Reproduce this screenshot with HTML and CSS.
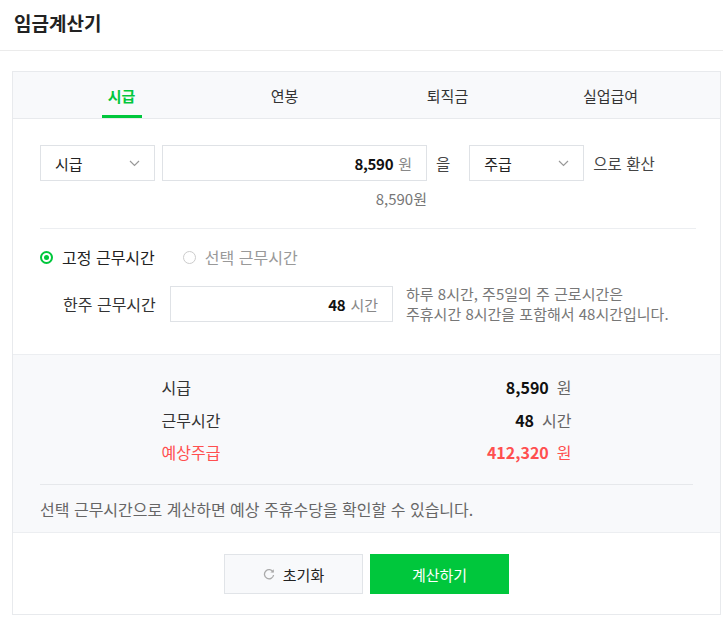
FILE: index.html
```html
<!DOCTYPE html>
<html lang="ko">
<head>
<meta charset="utf-8">
<link rel="stylesheet" href="styles.css">
</head>
<body>
<header class="top">
  <h1 class="title">임금계산기</h1>
</header>
<div class="card">
  <nav class="tabs">
    <div class="tab active"><span>시급</span></div>
    <div class="tab"><span>연봉</span></div>
    <div class="tab"><span>퇴직금</span></div>
    <div class="tab"><span>실업급여</span></div>
  </nav>
  <section class="form">
    <div class="row-convert">
      <div class="select s1"><span>시급</span><svg class="chev" width="11" height="7" viewBox="0 0 11 7"><path d="M1 1l4.5 4.5L10 1" fill="none" stroke="#999" stroke-width="1.2"/></svg></div>
      <div class="input wide"><b>8,590</b><span class="unit">원</span></div>
      <span class="word">을</span>
      <div class="select s2"><span>주급</span><svg class="chev" width="11" height="7" viewBox="0 0 11 7"><path d="M1 1l4.5 4.5L10 1" fill="none" stroke="#999" stroke-width="1.2"/></svg></div>
      <span class="word w2">으로 환산</span>
    </div>
    <div class="sub">8,590원</div>
    <hr class="divider">
    <div class="radios">
      <label class="radio on"><span class="dot"></span>고정 근무시간</label>
      <label class="radio off"><span class="dot"></span>선택 근무시간</label>
    </div>
    <div class="row-hours">
      <span class="hlabel">한주 근무시간</span>
      <div class="input hours"><b>48</b><span class="unit">시간</span></div>
      <p class="help">하루 8시간, 주5일의 주 근로시간은<br>주휴시간 8시간을 포함해서 48시간입니다.</p>
    </div>
  </section>
  <section class="result">
    <div class="rows">
      <div class="rrow"><span>시급</span><span class="val"><b>8,590</b><i>원</i></span></div>
      <div class="rrow"><span>근무시간</span><span class="val"><b>48</b><i>시간</i></span></div>
      <div class="rrow red"><span>예상주급</span><span class="val"><b>412,320</b><i>원</i></span></div>
    </div>
    <hr class="divider2">
    <p class="note">선택 근무시간으로 계산하면 예상 주휴수당을 확인할 수 있습니다.</p>
  </section>
  <div class="actions">
    <button class="btn reset"><svg width="12" height="12" viewBox="0 0 12 12"><path d="M10.2 4.2A4.6 4.6 0 1 0 10.6 7" fill="none" stroke="#aaa" stroke-width="1.3"/><path d="M10.8 1.2v3.4H7.4z" fill="#aaa"/></svg>초기화</button>
    <button class="btn go">계산하기</button>
  </div>
</div>
</body>
</html>
```
FILE: styles.css
```css
* { box-sizing: border-box; }
body {
  margin: 0;
  font-family: "Noto Sans CJK KR", "Noto Sans", sans-serif;
  color: #222;
  background: #fff;
  font-size: 14px;
}
.top {
  height: 51px;
  border-bottom: 1px solid #ebebeb;
  padding: 0 14px;
  display: flex;
  align-items: center;
}
.title {
  margin: 0;
  font-size: 19px;
  font-weight: 700;
  line-height: 1;
  margin-top: -6px;
}
.card {
  margin: 20px 2px 0 12px;
  border: 1px solid #e8eaed;
}
.tabs {
  display: grid;
  grid-template-columns: repeat(4, 1fr);
  padding: 0 28px 0 27px;
  background: #f8f9fb;
  border-bottom: 1px solid #e8eaed;
  height: 47px;
}
.tab {
  display: flex;
  justify-content: center;
  font-size: 15px;
  color: #333;
}
.tab span {
  display: block;
  line-height: 20px;
  padding: 14px 4px 0;
  height: 46px;
}
.tab.active span {
  color: #00c73c;
  font-weight: 700;
  border-bottom: 3px solid #00c73c;
  width: 40px;
  text-align: center;
  padding-left: 0;
  padding-right: 0;
}
.form {
  padding: 26px 24px 0 27px;
  height: 236px;
  border-bottom: 1px solid #eceef1;
}
.row-convert {
  display: flex;
  align-items: center;
  height: 36px;
}
.select {
  width: 115px;
  height: 36px;
  border: 1px solid #dfe2e6;
  display: flex;
  align-items: center;
  justify-content: space-between;
  padding: 0 14px 0 14px;
  font-size: 15px;
  color: #222;
}
.chev { display: block; }
.input {
  height: 36px;
  border: 1px solid #dfe2e6;
  display: flex;
  align-items: center;
  justify-content: flex-end;
  padding: 0 14px;
  font-size: 15px;
}
.input b { font-weight: 700; color: #111; letter-spacing: -0.3px; }
.unit { color: #888; margin-left: 5px; }
.wide { width: 265px; margin-left: 7px; }
.word { font-size: 15.5px; color: #444; margin-left: 9px; margin-right: 19px; }
.w2 { margin-left: 9px; margin-right: 0; }
.sub {
  width: 387px;
  text-align: right;
  color: #777;
  font-size: 15px;
  margin-top: 8px;
  line-height: 20px;
}
.divider {
  border: 0;
  border-top: 1px solid #eceef1;
  margin: 19px 0 0 0;
}
.radios {
  display: flex;
  gap: 28px;
  margin-top: 17px;
  height: 22px;
  align-items: center;
}
.radio {
  display: flex;
  align-items: center;
  font-size: 16px;
  color: #222;
}
.radio .dot {
  width: 13px;
  height: 13px;
  border-radius: 50%;
  margin-right: 9px;
  position: relative;
}
.radio.on .dot {
  border: 2px solid #00c73c;
  background: #fff;
}
.radio.on .dot::after {
  content: "";
  position: absolute;
  left: 2px; top: 2px;
  width: 5px; height: 5px;
  border-radius: 50%;
  background: #00c73c;
}
.radio.off { color: #999; }
.radio.off .dot { border: 1px solid #ccc; }
.row-hours {
  display: flex;
  align-items: center;
  margin-top: 16px;
  padding-left: 23px;
}
.hlabel { font-size: 16px; color: #333; width: 107px; }
.hours { width: 223px; }
.help {
  margin: 0 0 0 13px;
  font-size: 15px;
  line-height: 20px;
  color: #777;
}
.result {
  background: #f8f9fb;
  padding: 16px 27px 0 27px;
  height: 178px;
  border-bottom: 1px solid #eceef1;
}
.rows {
  width: 410px;
  margin: 0 auto;
}
.rrow {
  display: flex;
  justify-content: space-between;
  align-items: center;
  height: 32.5px;
  font-size: 16px;
  color: #333;
}
.val b { font-size: 16px; font-weight: 700; color: #111; }
.val i { font-style: normal; color: #666; margin-left: 8px; }
.red { color: #ff4f4f; }
.red .val b, .red .val i { color: #ff4f4f; }
.divider2 {
  border: 0;
  border-top: 1px solid #e6e8eb;
  margin: 15px 0 0 0;
}
.note {
  margin: 14px 0 0;
  font-size: 16px;
  line-height: 20px;
  color: #666;
}
.actions {
  display: flex;
  justify-content: center;
  gap: 7px;
  padding: 21px 0 20px;
}
.btn {
  width: 139px;
  height: 40px;
  font-family: inherit;
  font-size: 15px;
  display: flex;
  align-items: center;
  justify-content: center;
  gap: 8px;
  cursor: pointer;
}
.reset {
  background: #f8f9fb;
  border: 1px solid #e1e4e8;
  color: #222;
}
.go {
  background: #00c73c;
  border: 0;
  color: #fff;
}
```
